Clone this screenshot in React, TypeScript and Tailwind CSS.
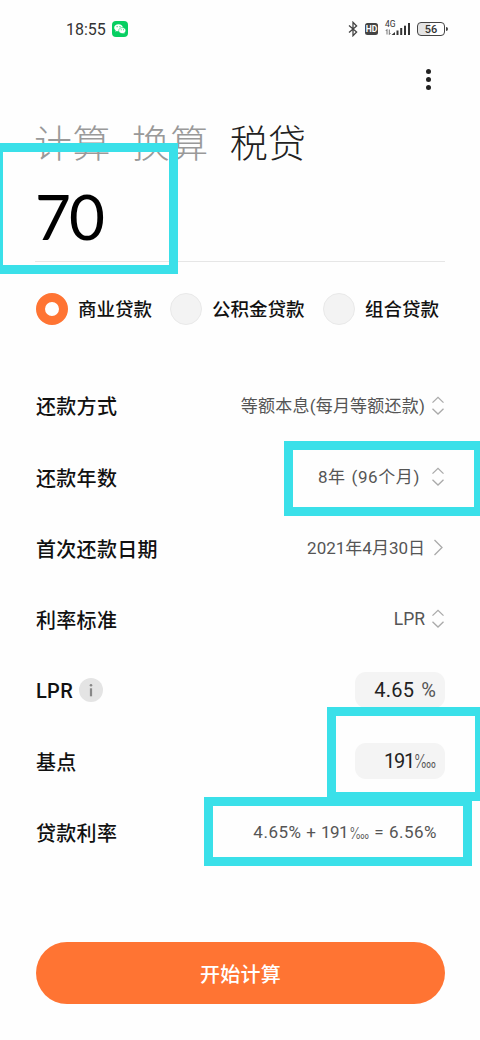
import type { ReactNode } from 'react';

const tabs = [
  { label: '计算', active: false },
  { label: '换算', active: false },
  { label: '税贷', active: true },
];

const loanTypes = [
  { label: '商业贷款', checked: true, gap: 'w-[134px]' },
  { label: '公积金贷款', checked: false, gap: 'w-[153px]' },
  { label: '组合贷款', checked: false, gap: 'w-[121px]' },
];

// Highlight frames drawn over the form
const highlights = [
  'left-[-6px] top-[143px] w-[184px] h-[131px]',
  'left-[284px] top-[441px] w-[199px] h-[75px]',
  'left-[327px] top-[707px] w-[157px] h-[94px]',
  'left-[204px] top-[797px] w-[268px] h-[69px]',
];

function StatusBar() {
  return (
    <div className="flex h-[58px] items-center pl-[66px] pr-[32px] text-[#333]">
      <span className="w-[40px] pt-[2px] font-[Roboto] text-[16px] leading-none">18:55</span>
      <svg className="ml-[6px]" width="16" height="16" viewBox="0 0 16 16">
        <rect width="16" height="16" rx="4" fill="#07cf62" />
        <path d="M6.5 3.3c-2.5 0-4.3 1.5-4.3 3.4 0 1.1.6 2 1.5 2.6l-.4 1.4 1.5-.8c.5.2 1.1.3 1.7.3 2.4 0 4.3-1.6 4.3-3.5S9 3.3 6.5 3.3z" fill="#fff" />
        <path d="M10.3 6.6c-2 0-3.6 1.3-3.6 3s1.6 3 3.6 3c.5 0 .9-.1 1.3-.2l1.2.7-.3-1.2c.8-.5 1.3-1.3 1.3-2.3 0-1.7-1.6-3-3.5-3z" fill="#fff" stroke="#07cf62" strokeWidth="0.6" />
        <g fill="#07cf62">
          <circle cx="5.1" cy="5.7" r="0.6" />
          <circle cx="8" cy="5.7" r="0.6" />
          <circle cx="9.2" cy="8.8" r="0.5" />
          <circle cx="11.5" cy="8.8" r="0.5" />
        </g>
      </svg>
      <div className="flex-1" />
      <svg width="10" height="16" viewBox="0 0 10 16" fill="none" stroke="#444" strokeWidth="1.3">
        <path d="M1 4.5 8.6 11 5 14.7V1.3L8.6 5 1 11.5" />
      </svg>
      <div className="ml-[7px] flex h-[12px] w-[13px] items-center justify-center rounded-[2.5px] bg-[#444] font-[Roboto] text-[8.5px] leading-none font-bold text-white">
        HD
      </div>
      <div className="relative ml-[7px] h-[18px] w-[27px]">
        <span className="absolute top-0 left-0 font-[Roboto] text-[8.5px] leading-none">4G</span>
        <svg width="27" height="18" viewBox="0 0 27 18">
          <g stroke="#666" strokeWidth="0.9" fill="none">
            <path d="M2 14.5v-5L.8 11M4.3 9.5v5L5.5 13" />
          </g>
          <g fill="#333">
            <path d="M6.5 15 10 12v3z" />
            <rect x="11.5" y="10.5" width="2" height="4.5" />
            <rect x="15.2" y="8" width="2" height="7" />
            <rect x="19" y="5.7" width="2" height="9.3" />
            <rect x="23" y="3" width="2" height="12" />
          </g>
        </svg>
      </div>
      <div className="ml-[5px] flex h-[14px] w-[28px] items-center justify-center rounded-[4px] border-[1.5px] border-[#444] bg-linear-to-r from-[#e4e4e4] from-45% to-white to-45% font-[Roboto] text-[11px] leading-none font-medium">
        <span className="pt-px">56</span>
      </div>
      <div className="ml-px h-[4px] w-[2px] rounded-r-sm bg-[#444]" />
    </div>
  );
}

function UpDown() {
  return (
    <svg width="14" height="20" viewBox="0 0 14 20" fill="none" stroke="#aaa" strokeWidth="1.3">
      <path d="M1.5 6.6 7 1.3l5.5 5.3M1.5 12.7 7 18l5.5-5.3" />
    </svg>
  );
}

function Chevron() {
  return (
    <svg width="14" height="20" viewBox="0 0 14 20" fill="none" stroke="#aaa" strokeWidth="1.3">
      <path d="M3.5 2 11 9.5 3.5 17" />
    </svg>
  );
}

// Basis-point sign, condensed to sit close to the number
function Myriad({ className }: { className: string }) {
  return <span className={`inline-block origin-right scale-x-80 font-[Inter] font-light ${className}`}>‱</span>;
}

function Row({ label, children }: { label: ReactNode; children: ReactNode }) {
  return (
    <div className="flex h-[71px] items-center justify-between">
      <div className="flex items-center text-[20px] font-medium tracking-[0.3px] text-[#111]">{label}</div>
      <div className="flex items-center text-[17px] text-[#555]">{children}</div>
    </div>
  );
}

export default function App() {
  return (
    <div className="relative h-[1040px] w-[480px] overflow-hidden bg-[#fefefe] font-[Roboto,'Noto_Sans_CJK_SC',sans-serif]">
      <StatusBar />

      {/* Overflow menu */}
      <div className="flex h-[42px] flex-col items-end justify-center gap-[3px] pr-[49px]">
        <i className="size-[5px] rounded-full bg-[#222]" />
        <i className="size-[5px] rounded-full bg-[#222]" />
        <i className="size-[5px] rounded-full bg-[#222]" />
      </div>

      {/* Tabs */}
      <div className="flex h-[88px] items-center gap-[21px] pl-[34px] text-[38px] leading-none font-[300] tracking-[0.4px]">
        {tabs.map((tab) => (
          <span key={tab.label} className={tab.active ? 'text-[#222]' : 'text-[#999]'}>
            {tab.label}
          </span>
        ))}
      </div>

      <div className="mx-[35px] flex h-[74px] items-center border-b border-[#e6e6e6] pb-[18px]">
        <span className="font-[Lato] text-[62px] leading-none tracking-[-2px] text-black">70</span>
      </div>

      {/* Loan type */}
      <div className="mt-[31px] flex h-[32px] items-center pl-[36px] text-[18.5px] font-medium text-[#111]">
        {loanTypes.map((type) => (
          <div key={type.label} className={`flex shrink-0 items-center gap-[10px] whitespace-nowrap ${type.gap}`}>
            {type.checked ? (
              <i className="size-[32px] shrink-0 rounded-full border-[9px] border-[#ff7433] bg-white" />
            ) : (
              <i className="size-[32px] shrink-0 rounded-full border border-[#e9e9e9] bg-[#f3f3f3]" />
            )}
            <span className="pt-[4px]">{type.label}</span>
          </div>
        ))}
      </div>

      <div className="mt-[45px] pr-[35px] pl-[36px]">
        <Row label={<span className="pt-[3px]">还款方式</span>}>
          <span className="mr-[6px] pt-[2px] tracking-[0.2px]">等额本息(每月等额还款)</span>
          <UpDown />
        </Row>
        <Row label={<span className="pt-[4px]">还款年数</span>}>
          <span className="mr-[11px] pt-[2px] tracking-[0.6px] [word-spacing:1px]">8年 (96个月)</span>
          <UpDown />
        </Row>
        <Row label={<span className="pt-[4px]">首次还款日期</span>}>
          <span className="mr-[6px] pt-[2px]">2021年4月30日</span>
          <Chevron />
        </Row>
        <Row label={<span className="pt-[4px]">利率标准</span>}>
          <span className="mr-[6px] pt-[2px] text-[17.5px]">LPR</span>
          <UpDown />
        </Row>
        <Row
          label={
            <>
              <span className="pt-[2px]">LPR</span>
              <svg className="ml-[6px]" width="24" height="24" viewBox="0 0 24 24">
                <circle cx="12" cy="12" r="12" fill="#e4e4e4" />
                <circle cx="12" cy="7.3" r="1.3" fill="#888" />
                <rect x="10.9" y="10.3" width="2.2" height="8" fill="#888" />
              </svg>
            </>
          }
        >
          <div className="flex h-[36px] w-[90px] items-center justify-end gap-[7px] rounded-[11px] bg-[#f4f4f4] pr-[9px]">
            <span className="text-[20px] tracking-[0.3px] text-[#222]">4.65</span>
            <span className="pt-px text-[20px]">%</span>
          </div>
        </Row>
        <Row label={<span className="pt-[4px]">基点</span>}>
          <div className="flex h-[36px] w-[90px] items-center justify-end rounded-[11px] bg-[#f4f4f4] pr-[8px]">
            <span className="-mr-[6px] text-[20px] tracking-[-1.2px] text-[#222]">191</span>
            <Myriad className="pt-px text-[18px]" />
          </div>
        </Row>
        <Row label={<span className="pt-[4px]">贷款利率</span>}>
          <span className="mr-[8px] flex items-center pt-[2px] whitespace-pre">
            <span className="tracking-[0.5px]">4.65% + </span>
            <span className="tracking-[-0.6px]">191</span>
            <Myriad className="-ml-[4px] text-[16px]" />
            <span className="tracking-[0.5px]"> = 6.56%</span>
          </span>
        </Row>
      </div>

      <button className="mt-[75px] ml-[36px] flex h-[62px] w-[409px] items-center justify-center rounded-full bg-[#ff7433] pt-[4px] text-[20px] font-medium tracking-[0.2px] text-white">
        开始计算
      </button>

      {highlights.map((frame) => (
        <div key={frame} className={`pointer-events-none absolute border-[9px] border-[#3ae0e9] ${frame}`} />
      ))}
    </div>
  );
}
